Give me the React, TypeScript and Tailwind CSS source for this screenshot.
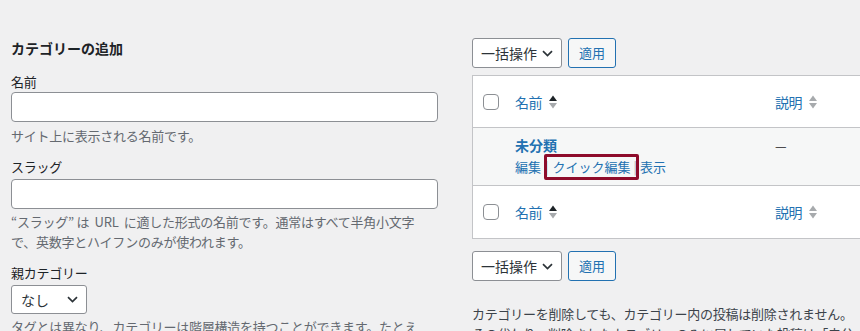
import React from "react";

function Chevron({ className = "" }: { className?: string }) {
  return (
    <svg width="11" height="7" viewBox="0 0 11 7" className={className} aria-hidden>
      <path d="M1 1.2l4.5 4.3L10 1.2" fill="none" stroke="#2c3338" strokeWidth="1.7" />
    </svg>
  );
}

function SortIcon({ active }: { active: boolean }) {
  return (
    <svg width="10" height="16" viewBox="0 0 10 16" className="ml-[6px]" aria-hidden>
      <path d="M5 1.5L9 7H1z" fill={active ? "#1d2327" : "#a7aaad"} />
      <path d="M5 14.5L9 9H1z" fill="#a7aaad" />
    </svg>
  );
}

function Checkbox() {
  return <span className="block h-4 w-4 rounded-[4px] border border-[#8c8f94] bg-white" />;
}

function BulkActions() {
  return (
    <div className="flex items-center gap-[6px]">
      <div className="flex h-[30px] w-[90px] items-center justify-between rounded-[3px] border border-[#8c8f94] bg-white pl-[8px] pr-[8px] text-[14px] tracking-normal text-[#2c3338]">
        <span>一括操作</span>
        <Chevron />
      </div>
      <button
        type="button"
        className="h-[30px] w-[48px] rounded-[3px] border border-[#2271b1] bg-[#f6f7f7] text-[13px] tracking-normal text-[#2271b1]"
      >
        適用
      </button>
    </div>
  );
}

function HeaderRow({ bottom }: { bottom?: boolean }) {
  return (
    <div
      className={`grid h-[52px] grid-cols-[42px_260px_1fr] items-center bg-white ${
        bottom ? "" : "border-b border-[#c3c4c7]"
      }`}
    >
      <div className="pl-[10px]">
        <Checkbox />
      </div>
      <div className="flex items-center text-[14px] tracking-[-0.5px] text-[#2271b1]">
        名前
        <SortIcon active />
      </div>
      <div className="flex items-center text-[14px] tracking-[-0.5px] text-[#2271b1]">
        説明
        <SortIcon active={false} />
      </div>
    </div>
  );
}

export default function App() {
  return (
    <div className="w-full overflow-hidden bg-[#f0f0f1] font-['Noto_Sans_CJK_JP',sans-serif] text-[13px] leading-[20px] tracking-[-0.25px] text-[#1d2327]">
      <div className="flex h-[331px] gap-[34px] pl-[11px] pt-[38px]">
        {/* left: add category form */}
        <div className="w-[427px] shrink-0">
          <h2 className="text-[14px] font-bold tracking-normal">カテゴリーの追加</h2>

          <div className="mt-[14px]">
            <label className="block">名前</label>
            <div className="h-[30px] w-full rounded-[4px] border border-[#8c8f94] bg-white" />
            <p className="mt-[4px] text-[#646970]">サイト上に表示される名前です。</p>
          </div>

          <div className="mt-[11px]">
            <label className="block">スラッグ</label>
            <div className="mt-[2px] h-[30px] w-full rounded-[4px] border border-[#8c8f94] bg-white" />
            <p className="mt-[3px] text-[#646970]">
              “スラッグ” は&nbsp; URL&nbsp; に適した形式の名前です。通常はすべて半角小文字
              <br />
              で、英数字とハイフンのみが使われます。
            </p>
          </div>

          <div className="mt-[11px]">
            <label className="block">親カテゴリー</label>
            <div className="mt-[2px] flex h-[29px] w-[76px] items-center justify-between rounded-[3px] border border-[#8c8f94] bg-white pl-[9px] pr-[8px] text-[14px] tracking-normal text-[#2c3338]">
              <span>なし</span>
              <Chevron />
            </div>
            <p className="mt-[3px] max-w-[424px] text-[#646970]">
              タグとは異なり、カテゴリーは階層構造を持つことができます。たとえば、ジャズというカテゴリーの下にビバップやビッグバンドという子カテゴリーを作る、といったようなことです。これはオプションです。
            </p>
          </div>
        </div>

        {/* right: category list */}
        <div className="w-[480px] shrink-0">
          <BulkActions />

          <div className="mt-[7px] border border-[#c3c4c7]">
            <HeaderRow />

            <div className="grid h-[58px] grid-cols-[42px_260px_1fr] border-b border-[#c3c4c7] bg-[#f6f7f7] pt-[7px]">
              <div />
              <div>
                <div className="text-[14px] font-bold tracking-normal text-[#2271b1]">未分類</div>
                <div className="mt-[2px] flex items-center text-[13px] tracking-normal text-[#2271b1]">
                  <span>編集</span>
                  <span className="relative ml-[4px] flex items-center">
                    <span className="text-[#a7aaad]">|</span>
                    <span className="ml-[4px]">クイック編集</span>
                    <span className="ml-[3px] text-[#a7aaad]">|</span>
                    <span className="pointer-events-none absolute -bottom-[3px] -left-[1px] -right-[2px] -top-[3px] rounded-[2px] border-[3px] border-[#8e0c2b]" />
                  </span>
                  <span className="ml-[3px]">表示</span>
                </div>
              </div>
              <div className="pt-[1px] text-[#1d2327]">—</div>
            </div>

            <HeaderRow bottom />
          </div>

          <div className="mt-[12px]">
            <BulkActions />
          </div>

          <p className="mt-[23px] max-w-[384px] text-[#3c434a]">
            カテゴリーを削除しても、カテゴリー内の投稿は削除されません。その代わり、削除されたカテゴリーのみに属していた投稿は「未分類」カテゴリーに割り当てられます。
          </p>
        </div>
      </div>
    </div>
  );
}
